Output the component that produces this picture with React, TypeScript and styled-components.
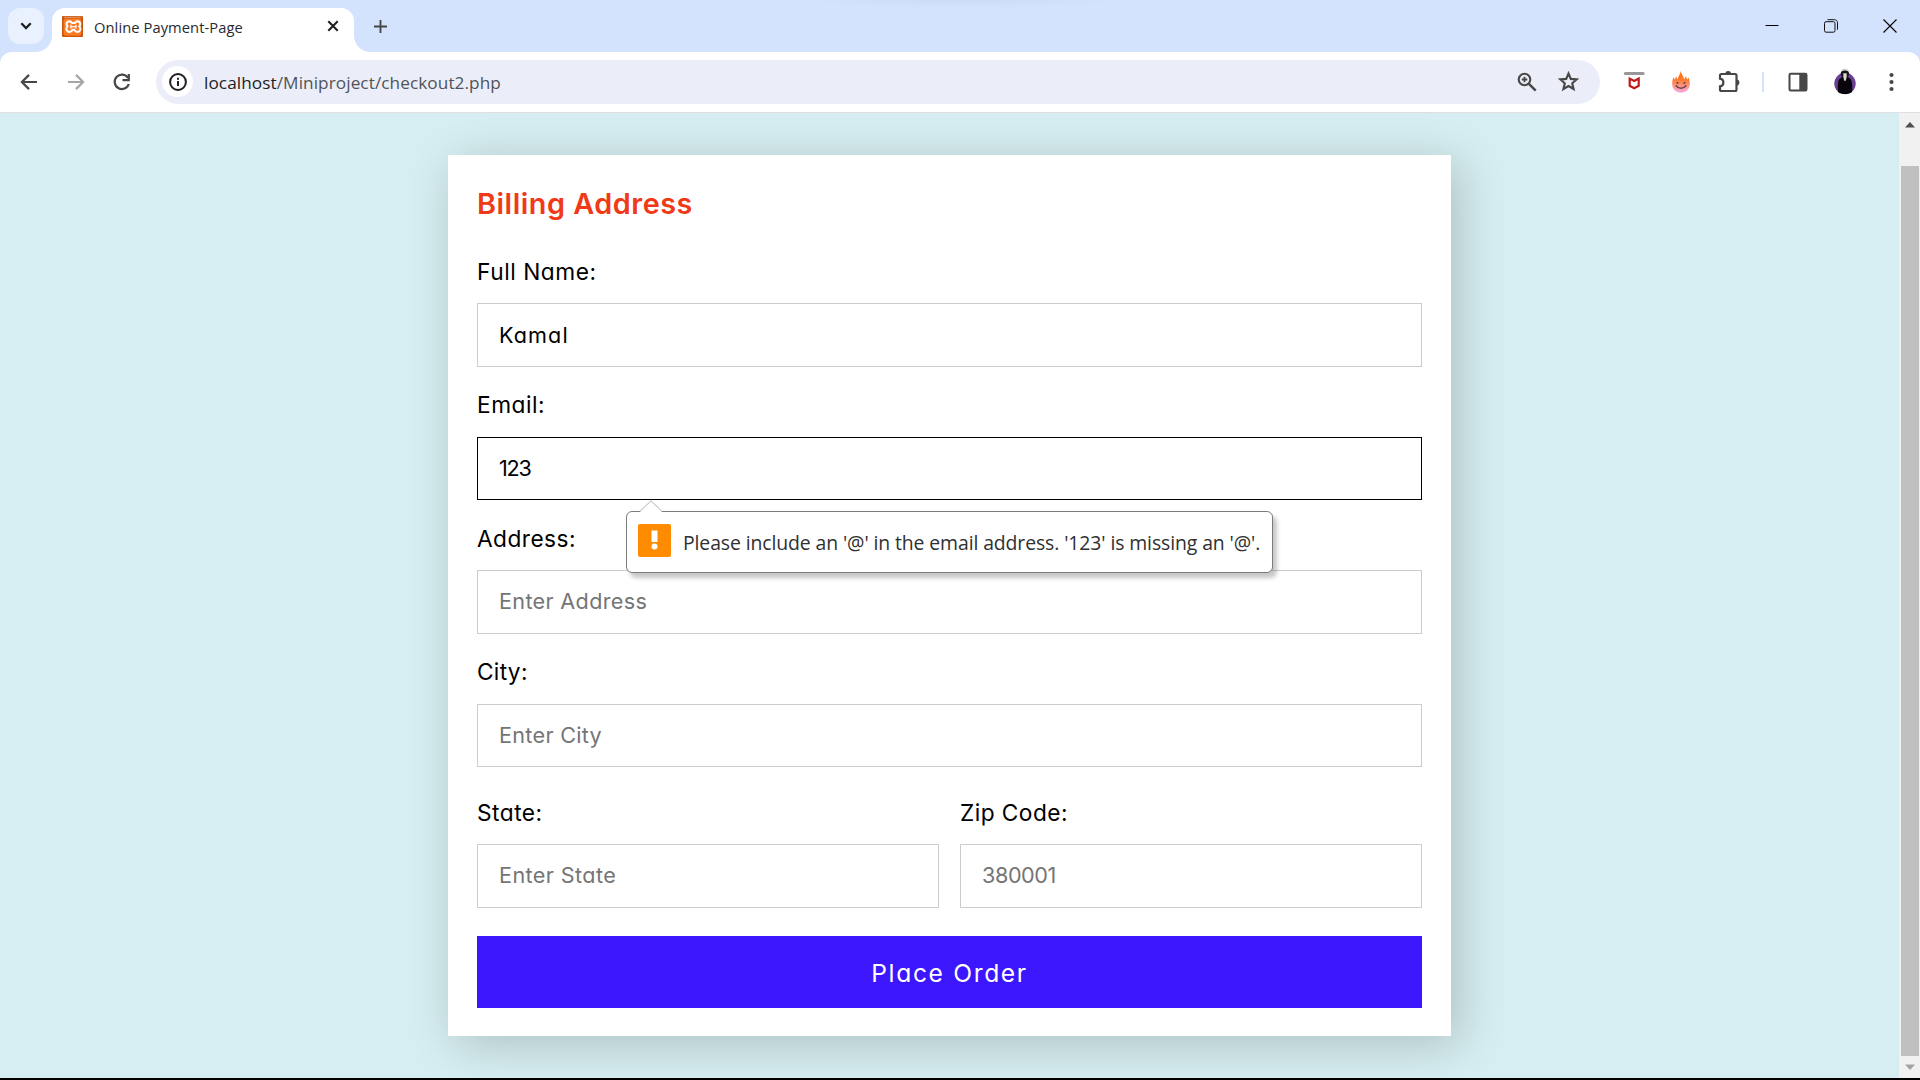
import React from "react";
import styled, { createGlobalStyle, css } from "styled-components";

const uiFont = '"Segoe UI", "Open Sans", "Noto Sans", sans-serif';
const formFont = 'Inter, "Open Sans", sans-serif';

const GlobalStyle = createGlobalStyle`
  *, *::before, *::after { box-sizing: border-box; }
  html, body { margin: 0; padding: 0; overflow: hidden; }
  body { font-family: ${uiFont}; background: #000; }
`;

const Window = styled.div`
  display: flex;
  flex-direction: column;
  width: 1920px;
  height: 1080px;
  background: #000;
  padding-bottom: 2px;
`;

/* ---------- tab strip ---------- */

const TabStrip = styled.header`
  display: flex;
  align-items: flex-start;
  flex: none;
  height: 52px;
  padding: 8px 0 0 8px;
  background: radial-gradient(ellipse 160px 8px at 961px 0, #cbdaf5, #d3e3fd) #d3e3fd;
`;

const TabSearch = styled.button`
  display: grid;
  place-items: center;
  width: 36px;
  height: 36px;
  padding: 0;
  border: 0;
  border-radius: 12px;
  background: #e9f1fe;
`;

const Tab = styled.div`
  position: relative;
  display: flex;
  align-items: center;
  width: 302px;
  height: 44px;
  margin-left: 8px;
  padding: 0 15px 8px 10px;
  border-radius: 13px 13px 0 0;
  background: #fff;

  &::before,
  &::after {
    content: "";
    position: absolute;
    bottom: 0;
    width: 16px;
    height: 16px;
  }
  &::before {
    left: -16px;
    background: radial-gradient(circle at 0 0, transparent 15.5px, #fff 16.2px);
  }
  &::after {
    right: -16px;
    background: radial-gradient(circle at 100% 0, transparent 15.5px, #fff 16.2px);
  }
`;

const TabTitle = styled.span`
  flex: 1;
  margin-left: 11px;
  padding-top: 2px;
  font-size: 14.7px;
  line-height: 22px;
  letter-spacing: 0.08px;
  color: #2a2b2e;
`;

const NewTab = styled.div`
  display: grid;
  place-items: center;
  width: 36px;
  height: 36px;
  margin-left: 8px;
`;

const WindowControls = styled.div`
  display: flex;
  align-items: center;
  gap: 45px;
  height: 36px;
  margin-left: auto;
  padding-right: 23px;
`;

/* ---------- toolbar ---------- */

const ToolbarBack = styled.div`
  flex: none;
  background: #d3e3fd;
`;

const Toolbar = styled.nav`
  display: flex;
  align-items: center;
  height: 61px;
  padding: 0 0 1px 19px;
  border-bottom: 1px solid #dedfe1;
  border-radius: 12px 12px 0 0;
  background: #fff;
`;

const NavButtons = styled.div`
  display: flex;
  align-items: center;
  gap: 26.5px;
  width: 137px;
`;

const Omnibox = styled.div`
  display: flex;
  align-items: center;
  width: 1444px;
  height: 44px;
  padding: 0 21px 0 6px;
  border-radius: 22px;
  background: #ebeef8;
`;

const SiteInfo = styled.span`
  display: grid;
  place-items: center;
  width: 31px;
  height: 31px;
  border-radius: 50%;
  background: #fff;
`;

const Url = styled.span`
  flex: 1;
  margin-left: 11px;
  padding-top: 2px;
  font-size: 17.2px;
  line-height: 26px;
  letter-spacing: 0.08px;
  color: #50535a;
`;

const Host = styled.span`
  color: #1f2023;
`;

const OmniboxActions = styled.div`
  display: flex;
  align-items: center;
  gap: 20px;
`;

const Extensions = styled.div`
  display: flex;
  align-items: center;
  padding-left: 23px;
`;

const Slot = styled.span<{ $w: number; $gap?: number }>`
  display: flex;
  justify-content: center;
  width: ${(p) => p.$w}px;
  margin-left: ${(p) => p.$gap ?? 0}px;
`;

const Separator = styled.span`
  width: 2px;
  height: 20px;
  margin-left: 22px;
  background: #d3e3fd;
`;

const Svg = styled.svg`
  display: block;
  flex: none;
`;

/* ---------- page ---------- */

const Viewport = styled.div`
  display: flex;
  flex: 1;
  min-height: 0;
  background: #d6eef1;
`;

const Page = styled.main`
  flex: 1;
  padding: 42px 0 0 448px;
  overflow: hidden;
`;

const Card = styled.form`
  width: 1003px;
  height: 881px;
  padding: 28px 29px 28px;
  background: #fff;
  box-shadow: 7.5px 7.5px 45px rgba(0, 0, 0, 0.2);
  font-family: ${formFont};
  font-feature-settings: "cv11", "kern";
`;

const Title = styled.h3`
  margin: 0;
  font-size: 28.8px;
  font-weight: 600;
  line-height: 41px;
  letter-spacing: 0.53px;
  color: #f03a17;
`;

const Field = styled.div<{ $top: number }>`
  position: relative;
  flex: 1;
  margin-top: ${(p) => p.$top}px;
`;

const Label = styled.label<{ $track: number; $gap?: number }>`
  display: block;
  margin-bottom: ${(p) => p.$gap ?? 13.5}px;
  font-size: 22.7px;
  font-weight: 370;
  line-height: 36px;
  letter-spacing: ${(p) => p.$track}px;
  color: #000;
`;

const Input = styled.input<{ $track: number; $active?: boolean }>`
  display: block;
  width: 100%;
  height: 63.6px;
  padding: 0 21px;
  border: 1px solid #ccc;
  border-radius: 0;
  outline: none;
  background: #fff;
  font-family: inherit;
  font-size: 21.6px;
  font-weight: 370;
  font-feature-settings: "cv11", "kern";
  letter-spacing: ${(p) => p.$track}px;
  color: #000;
  ${(p) =>
    p.$active &&
    css`
      border-color: #000;
    `}
  &:placeholder-shown {
    padding-bottom: 1.6px;
  }
  &::placeholder {
    color: #757575;
    opacity: 1;
  }
`;

const Columns = styled.div`
  display: flex;
  gap: 21px;
`;

const Submit = styled.button`
  display: block;
  width: 100%;
  height: 72px;
  margin-top: 28.4px;
  padding: 1.5px 0 0;
  border: 0;
  background: #3c16fc;
  font-family: inherit;
  font-size: 24.6px;
  font-weight: 430;
  font-feature-settings: "cv11", "kern";
  letter-spacing: 1.65px;
  color: #fff;
`;

/* ---------- validation bubble ---------- */

const Bubble = styled.div`
  position: absolute;
  z-index: 2;
  top: calc(100% + 10.5px);
  left: 149px;
  display: flex;
  align-items: center;
  width: 647px;
  height: 62px;
  padding: 0 0 2px 11px;
  border: 1px solid #7b7b7b;
  border-radius: 6px;
  background: #fff;
  box-shadow: 4px 5px 4px rgba(0, 0, 0, 0.22);
`;

const BubbleArrow = styled.svg`
  position: absolute;
  top: -12px;
  left: 12px;
`;

const BubbleText = styled.span`
  margin-left: 12px;
  padding-top: 5px;
  font-family: ${uiFont};
  font-size: 19.4px;
  line-height: 28px;
  font-feature-settings: normal;
  letter-spacing: -0.1px;
  white-space: nowrap;
  color: #303030;
`;

/* ---------- scrollbar ---------- */

const Scrollbar = styled.div`
  display: flex;
  flex-direction: column;
  align-items: center;
  width: 21px;
  background: #f1f1f1;
`;

const ScrollThumb = styled.div`
  width: 18px;
  height: 890px;
  margin: 38px 0 8px;
  background: #c0c0c0;
`;

const ScrollArrow = styled.svg<{ $top: number }>`
  display: block;
  flex: none;
  margin-top: ${(p) => p.$top}px;
  margin-left: 1px;
`;

const Xampp = () => (
  <Svg width="21" height="21" viewBox="0 0 21 21">
    <rect width="21" height="21" rx="1" fill="#c9560f" />
    <rect x="1.500" y="2.400" width="17.800" height="17.400" rx="2.500" fill="#fb7a24" />
    <path d="M2 1.300h17.600" stroke="#e08a55" strokeWidth="1.400" />
    <path
      d="M7.400 5.400c-2 0-3 1.300-2.800 2.900.1 1 .6 1.600 1 2.200-.9.700-1.400 1.700-1.200 2.900.3 1.800 2 2.800 3.700 2.400 1.200-.3 1.800-1 2.300-1.900h2c.5.900 1.100 1.600 2.300 1.900 1.700.4 3.400-.6 3.700-2.400.2-1.200-.3-2.200-1.200-2.900.4-.6.900-1.200 1-2.200.2-1.600-.8-2.900-2.800-2.900-1.400 0-2 .6-2.600 1.600H10c-.6-1-1.200-1.600-2.600-1.600z"
      fill="none"
      stroke="#fff"
      strokeWidth="2.100"
      strokeLinejoin="round"
    />
    <path d="M8.900 8.800v3.600M13.900 8.800v3.600M8.900 10.600h5" stroke="#fff" strokeWidth="1.200" />
  </Svg>
);

const Flame = () => (
  <Svg width="18" height="22" viewBox="0 0 18 22">
    <defs>
      <linearGradient id="flame" x1="0" y1="0" x2="0" y2="1">
        <stop offset="0" stopColor="#ff6a00" />
        <stop offset="0.450" stopColor="#fb7f3c" />
        <stop offset="0.750" stopColor="#fb9a9a" />
        <stop offset="1" stopColor="#f5a9ee" />
      </linearGradient>
    </defs>
    <path
      d="M8.800 0c.2 3 2.800 4.800 3.300 8.200.9-.7 1.400-1.600 1.400-2.900 1 .9 1.400 2 1.500 3.300.8-.5 1.300-1.300 1.600-2.400.8 1.900 1.200 4.300 1.200 6.900 0 5-3.800 8.700-8.800 8.700s-8.800-3.700-8.800-8.700C.2 10.500.6 8.100 1.400 6.200c.3 1.100.8 1.900 1.600 2.400.1-1.300.5-2.400 1.500-3.300 0 1.300.3 2.200 1.100 2.900C6 4.800 8.600 3 8.800 0z"
      fill="url(#flame)"
    />
    <circle cx="5.600" cy="12" r="1.100" fill="#6b4340" />
    <circle cx="12.400" cy="12" r="1.100" fill="#6b4340" />
    <path d="M4.100 14.800c2.500 3.300 7.300 3.300 9.800 0" fill="none" stroke="#6b4340" strokeWidth="1.500" strokeLinecap="round" />
  </Svg>
);

const Avatar = () => (
  <Svg width="22" height="27" viewBox="0 0 22 27">
    <circle cx="11" cy="15.500" r="10.700" fill="#6a3f92" />
    <circle cx="10.900" cy="4.800" r="4.200" fill="#d4d4d4" />
    <path d="M3.900 24c-.4-7 .1-12 2.100-13.600L9 8.700h4l3 1.700c2 1.600 2.500 6.600 2.100 13.600-2 1.500-4.300 2-7.100 2s-5.100-.5-7.100-2z" fill="#08060c" />
    <path d="M6.700 5.800c0-2.200 1.800-3.200 4.200-3.200s4.200 1 4.200 3.200c0 1.700-.8 2.700-1.700 3.500H8.400c-.9-.8-1.700-1.800-1.700-3.500z" fill="#17131a" />
    <path d="M9.300 5.200h3.400v3.600l-.9 4h-1.600l-.9-4z" fill="#dcd8ce" />
  </Svg>
);

export default function App() {
  return (
    <Window>
      <GlobalStyle />
      <TabStrip>
        <TabSearch aria-label="Search tabs">
          <Svg width="12" height="8" viewBox="0 0 12 8">
            <path d="M1.300 1.300 6 6l4.700-4.700" fill="none" stroke="#1f1f1f" strokeWidth="2.300" />
          </Svg>
        </TabSearch>
        <Tab>
          <Xampp />
          <TabTitle>Online Payment-Page</TabTitle>
          <Svg width="12" height="12" viewBox="0 0 12 12">
            <path d="m1.300 1.300 9.400 9.400m0-9.400-9.400 9.400" stroke="#1f1f1f" strokeWidth="2.100" />
          </Svg>
        </Tab>
        <NewTab>
          <Svg width="13" height="13" viewBox="0 0 13 13">
            <path d="M6.500 0v13M0 6.500h13" stroke="#474747" strokeWidth="1.900" />
          </Svg>
        </NewTab>
        <WindowControls>
          <Svg width="14" height="14" viewBox="0 0 14 14">
            <path d="M.5 6.500h13" stroke="#000" />
          </Svg>
          <Svg width="14" height="14" viewBox="0 0 14 14">
            <rect x=".5" y="2.700" width="10.500" height="10.500" rx="1.600" fill="none" stroke="#111" />
            <path d="M3.500.7h7c1.700 0 3 1.300 3 3v7" fill="none" stroke="#111" />
          </Svg>
          <Svg width="14" height="14" viewBox="0 0 14 14">
            <path d="m.5.500 13 13m0-13-13 13" stroke="#000" strokeWidth="1.100" />
          </Svg>
        </WindowControls>
      </TabStrip>

      <ToolbarBack>
        <Toolbar>
          <NavButtons>
            <Svg width="20" height="20" viewBox="0 0 20 20">
              <path d="M18 10H3.500M10 2.900 2.900 10l7.100 7.100" fill="none" stroke="#474747" strokeWidth="2.200" />
            </Svg>
            <Svg width="20" height="20" viewBox="0 0 20 20">
              <path d="M2 10h14.500M10 2.900l7.100 7.100-7.100 7.100" fill="none" stroke="#a6a6a6" strokeWidth="2.200" />
            </Svg>
            <Svg width="20" height="20" viewBox="0 0 20 20">
              <path d="M16 6A7.200 7.200 0 1 0 16.800 12" fill="none" stroke="#474747" strokeWidth="2.200" />
              <path d="M16.800 2v6.200H10.500" fill="none" stroke="#474747" strokeWidth="2.200" />
            </Svg>
          </NavButtons>
          <Omnibox>
            <SiteInfo>
              <Svg width="18" height="18" viewBox="0 0 18 18">
                <circle cx="9" cy="9" r="7.900" fill="none" stroke="#1f1f1f" strokeWidth="2" />
                <path d="M9 8v5M9 4.800v2" stroke="#1f1f1f" strokeWidth="2" />
              </Svg>
            </SiteInfo>
            <Url>
              <Host>localhost</Host>/Miniproject/checkout2.php
            </Url>
            <OmniboxActions>
              <Svg width="20" height="20" viewBox="0 0 20 20">
                <circle cx="7.500" cy="7.500" r="5.800" fill="none" stroke="#474747" strokeWidth="2.100" />
                <path d="m11.700 11.700 7 7" stroke="#474747" strokeWidth="2.500" />
                <path d="M7.500 4.700v5.600M4.700 7.500h5.600" stroke="#474747" strokeWidth="1.800" />
              </Svg>
              <Svg width="22" height="21" viewBox="0 0 22 21">
                <path
                  d="m11.500 2.500 2.300 5.400 5.900.5-4.500 3.900 1.400 5.700-5.100-3-5.100 3 1.400-5.700-4.500-3.900 5.900-.5z"
                  fill="none"
                  stroke="#474747"
                  strokeWidth="2.100"
                />
              </Svg>
            </OmniboxActions>
          </Omnibox>
          <Extensions>
            <Slot $w={22}>
              <Svg width="22" height="20" viewBox="0 0 22 20">
                <path d="M2.300 1.500h17.800" stroke="#9b9799" strokeWidth="3" strokeLinecap="round" />
                <path d="M6.700 6.600 11.200 9l4.500-2.400v7.200l-4.500 2.400-4.500-2.400z" fill="none" stroke="#c01818" strokeWidth="2.200" />
              </Svg>
            </Slot>
            <Slot $w={18} $gap={27}>
              <Flame />
            </Slot>
            <Slot $w={22} $gap={28}>
              <Svg width="22" height="22" viewBox="0 0 22 22">
                <path
                  d="M3.500 3H17q1.500 0 1.500 1.500v14q0 1.500-1.500 1.500H3.500Q2 20 2 18.500v-3.200c4.500-.4 4.500-7.200 0-7.600V4.500Q2 3 3.500 3z"
                  fill="none"
                  stroke="#474747"
                  strokeWidth="2.200"
                />
                <path d="M7.300 3a2.900 2.900 0 0 1 5.800 0zM18.500 8.600a2.900 2.900 0 0 1 0 5.800z" fill="#474747" />
              </Svg>
            </Slot>
            <Separator />
            <Slot $w={20} $gap={24}>
              <Svg width="20" height="20" viewBox="0 0 20 20">
                <rect x="1.500" y="1.700" width="17" height="16.800" rx="1.200" fill="none" stroke="#474747" strokeWidth="2" />
                <path d="M11.300 1.700h7.200v16.800h-7.200z" fill="#474747" />
              </Svg>
            </Slot>
            <Slot $w={22} $gap={26}>
              <Avatar />
            </Slot>
            <Slot $w={5} $gap={33}>
              <Svg width="5" height="20" viewBox="0 0 5 20">
                <circle cx="2.500" cy="3" r="2.100" fill="#474747" />
                <circle cx="2.500" cy="10" r="2.100" fill="#474747" />
                <circle cx="2.500" cy="17" r="2.100" fill="#474747" />
              </Svg>
            </Slot>
          </Extensions>
        </Toolbar>
      </ToolbarBack>

      <Viewport>
        <Page>
          <Card>
            <Title>Billing Address</Title>
            <Field $top={29.5}>
              <Label $track={0.55}>Full Name:</Label>
              <Input $track={1.1} defaultValue="Kamal" />
            </Field>
            <Field $top={20.5}>
              <Label $track={0.5}>Email:</Label>
              <Input $track={-1.2} $active defaultValue="123" />
              <Bubble>
                <BubbleArrow width="24" height="13" viewBox="0 0 24 13">
                  <path d="M.8 12 12 .8 23.200 12v1H.8z" fill="#fff" />
                  <path d="M.8 11.500 12 .8l11.200 10.700" fill="none" stroke="#b0b0b0" />
                </BubbleArrow>
                <Svg width="33" height="33" viewBox="0 0 33 33">
                  <rect width="33" height="33" rx="2" fill="#ff8c00" />
                  <path d="M13.500 6.500h6V18h-6z" fill="#fff" />
                  <circle cx="16.500" cy="22.500" r="3" fill="#fff" />
                </Svg>
                <BubbleText>Please include an '@' in the email address. '123' is missing an '@'.</BubbleText>
              </Bubble>
            </Field>
            <Field $top={20.5}>
              <Label $track={0.45}>Address:</Label>
              <Input $track={0.33} placeholder="Enter Address" />
            </Field>
            <Field $top={20.5}>
              <Label $track={0.3}>City:</Label>
              <Input $track={0.3} placeholder="Enter City" />
            </Field>
            <Columns>
              <Field $top={27.9}>
                <Label $track={0.5} $gap={12.7}>State:</Label>
                <Input $track={0.4} placeholder="Enter State" />
              </Field>
              <Field $top={27.9}>
                <Label $track={0.45} $gap={12.7}>Zip Code:</Label>
                <Input $track={-0.4} placeholder="380001" />
              </Field>
            </Columns>
            <Submit type="button">Place Order</Submit>
          </Card>
        </Page>
        <Scrollbar>
          <ScrollArrow $top={9} width="10" height="6" viewBox="0 0 10 6">
            <path d="M0 5.500 5 0l5 5.500z" fill="#505050" />
          </ScrollArrow>
          <ScrollThumb />
          <ScrollArrow $top={0} width="10" height="6" viewBox="0 0 10 6">
            <path d="M0 .5h10L5 6z" fill="#a3a3a3" />
          </ScrollArrow>
        </Scrollbar>
      </Viewport>
    </Window>
  );
}
